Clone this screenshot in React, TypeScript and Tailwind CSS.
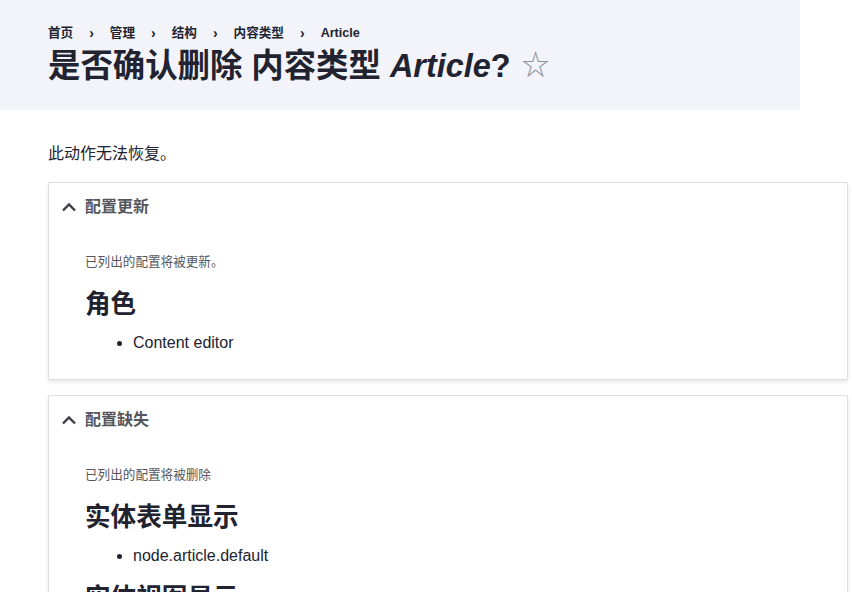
const font = { fontFamily: '"Liberation Sans", "Noto Sans CJK SC", sans-serif' };

const crumbs = ['首页', '管理', '结构', '内容类型', 'Article'];

function Chevron() {
  return (
    <svg width="16" height="10" viewBox="0 0 16 10" className="text-[#3b3c45]">
      <polyline points="2,8.5 8,2.5 14,8.5" fill="none" stroke="currentColor" strokeWidth="2.4" />
    </svg>
  );
}

function Section({ title, note, groups }: { title: string; note: string; groups: { heading: string; items: string[] }[] }) {
  return (
    <div className="mb-[15px] w-[800px] rounded-[2px] border border-[#dedfe4] bg-white shadow-[0_2px_4px_rgba(0,0,0,0.1)]">
      {/* Summary */}
      <div className="flex h-[48px] items-center pl-[12px] text-[#55565b]">
        <Chevron />
        <span className="ml-[8px] text-[16px] font-bold">{title}</span>
      </div>

      {/* Body */}
      <div className="pl-[36px] pt-[22px] pb-[24px]">
        <p className="text-[12.6px] leading-[18px] text-[#55565b]">{note}</p>
        {groups.map((g, i) => (
          <div key={g.heading}>
            <h2 className={`${i > 0 ? 'mt-[14px]' : 'mt-[17px]'} text-[25.6px] font-bold leading-[32px] text-[#222330]`}>{g.heading}</h2>
            <ul className="mt-[11px] list-disc pl-[48px] text-[16px] leading-[24px] text-[#222330]">
              {g.items.map((item) => (
                <li key={item}>{item}</li>
              ))}
            </ul>
          </div>
        ))}
      </div>
    </div>
  );
}

export default function App() {
  return (
    <div className="min-h-screen bg-white text-[#222330]" style={font}>
      {/* Page header */}
      <div className="h-[110px] w-[800px] bg-[#f3f4f9] pl-12 pt-[25px]">
        <nav className="flex items-center text-[12.6px] font-bold leading-[16px]">
          {crumbs.map((c, i) => (
            <span key={c} className="flex items-center">
              {i > 0 && <span className="mx-[16px] text-[14px] font-bold">›</span>}
              <span>{c}</span>
            </span>
          ))}
        </nav>
        <h1 className="mt-[5px] flex items-center text-[32.4px] font-bold leading-[40px]">
          <span>
            是否确认删除 内容类型 <em>Article</em>?
          </span>
          <span className="ml-[11px] text-[28px] font-normal text-[#8e929c]">☆</span>
        </h1>
      </div>

      {/* Content */}
      <div className="pl-12 pt-[32px]">
        <p className="text-[16px] leading-[24px]">此动作无法恢复。</p>
        <div className="mt-[16px]">
          <Section
            title="配置更新"
            note="已列出的配置将被更新。"
            groups={[{ heading: '角色', items: ['Content editor'] }]}
          />
          <Section
            title="配置缺失"
            note="已列出的配置将被删除"
            groups={[
              { heading: '实体表单显示', items: ['node.article.default'] },
              { heading: '实体视图显示', items: ['node.article.default', 'node.article.rss', 'node.article.teaser'] },
            ]}
          />
        </div>
      </div>
    </div>
  );
}
